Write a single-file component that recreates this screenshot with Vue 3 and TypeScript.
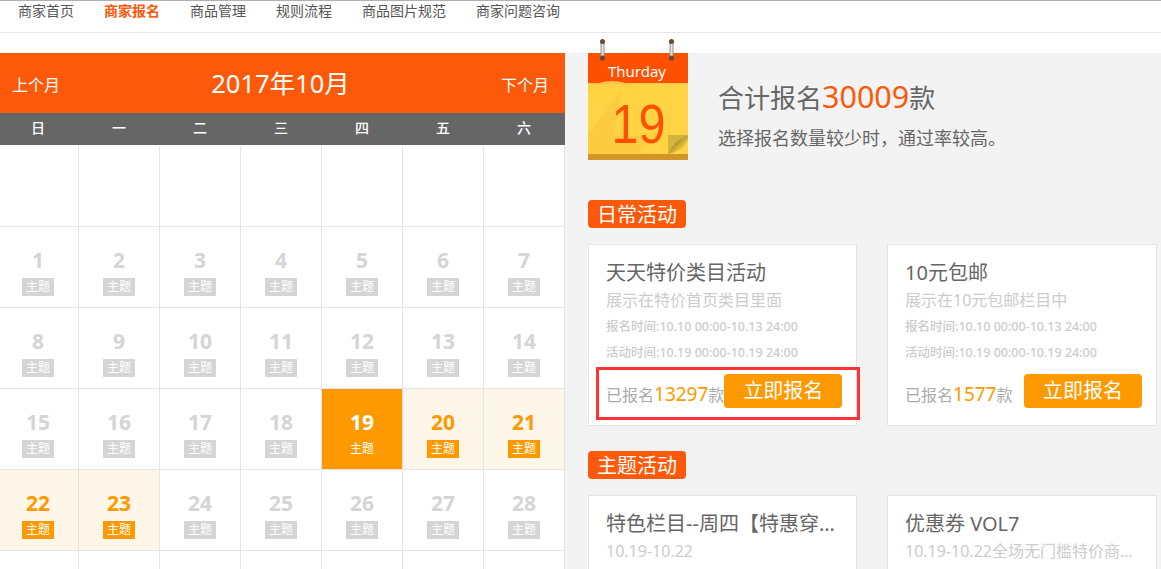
<script setup lang="ts">
interface Cell {
  day?: number
  state?: 'today' | 'open'
}

interface Activity {
  title: string
  desc: string
  signup?: string
  period?: string
  count?: number
  marked?: boolean
}

const navItems = ['商家首页', '商家报名', '商品管理', '规则流程', '商品图片规范', '商家问题咨询']
const weekdays = ['日', '一', '二', '三', '四', '五', '六']

const cells: Cell[] = [
  ...Array.from({ length: 7 }, () => ({})),
  ...Array.from({ length: 28 }, (_, i): Cell => {
    const day = i + 1
    if (day === 19) return { day, state: 'today' }
    if (day >= 20 && day <= 23) return { day, state: 'open' }
    return { day }
  }),
  ...Array.from({ length: 7 }, () => ({}))
]

const daily: Activity[] = [
  {
    title: '天天特价类目活动',
    desc: '展示在特价首页类目里面',
    signup: '10.10 00:00-10.13 24:00',
    period: '10.19 00:00-10.19 24:00',
    count: 13297,
    marked: true
  },
  {
    title: '10元包邮',
    desc: '展示在10元包邮栏目中',
    signup: '10.10 00:00-10.13 24:00',
    period: '10.19 00:00-10.19 24:00',
    count: 1577
  }
]

const themed: Activity[] = [
  { title: '特色栏目--周四【特惠穿搭专场】', desc: '10.19-10.22' },
  { title: '优惠券 VOL7', desc: '10.19-10.22全场无门槛特价商品专场活动' }
]
</script>

<template>
  <div class="page">
    <nav class="nav">
      <a v-for="(item, i) in navItems" :key="item" :class="{ active: i === 1 }">{{ item }}</a>
    </nav>
    <div class="strip"></div>

    <main class="main">
      <section class="calendar">
        <header class="month">
          <span class="month-link">上个月</span>
          <h1>2017年10月</h1>
          <span class="month-link">下个月</span>
        </header>
        <div class="weekdays">
          <span v-for="w in weekdays" :key="w">{{ w }}</span>
        </div>
        <div class="days">
          <div v-for="(cell, i) in cells" :key="i" class="cell" :class="cell.state">
            <template v-if="cell.day">
              <b>{{ cell.day }}</b>
              <span class="tag">主题</span>
            </template>
          </div>
        </div>
      </section>

      <section class="side">
        <div class="hero">
          <svg class="hero-icon" width="100" height="121" viewBox="0 0 100 121">
            <defs>
              <linearGradient id="pin" x1="0" x2="1" y1="0" y2="0">
                <stop offset="0" stop-color="#8d8d8d" />
                <stop offset="0.5" stop-color="#e6e6e6" />
                <stop offset="1" stop-color="#8d8d8d" />
              </linearGradient>
              <linearGradient id="fold" x1="0" x2="1" y1="0" y2="1">
                <stop offset="0.25" stop-color="#9c7c1c" />
                <stop offset="0.75" stop-color="#f2cd45" />
              </linearGradient>
            </defs>
            <rect x="0" y="14" width="100" height="30" fill="#ff5000" />
            <rect x="0" y="44" width="100" height="71" fill="#ffd343" />
            <path d="M0 97 L34 50 L26 97 H64 L50 115 H0 Z" fill="#fccb40" />
            <path d="M0 50 Q25 36 47 50" fill="none" stroke="#fccb40" stroke-width="2" />
            <rect x="0" y="115" width="100" height="6" fill="#d2952a" />
            <path d="M0 44.5 H100" stroke="#ffb35c" stroke-width="1" stroke-dasharray="2 1" />
            <path d="M80 115 V96 H100 Z" fill="#d6b53f" />
            <path d="M80 115 Q86 101 100 96 V100 Q97 111 80 115 Z" fill="url(#fold)" />
            <rect x="12.5" y="2" width="4" height="17" fill="url(#pin)" />
            <rect x="81.5" y="2" width="4" height="17" fill="url(#pin)" />
            <circle cx="14.5" cy="2.5" r="2.5" fill="#6b4a30" />
            <circle cx="14.5" cy="19" r="2.5" fill="#5a4a40" />
            <circle cx="83.5" cy="2.5" r="2.5" fill="#6b4a30" />
            <circle cx="83.5" cy="19" r="2.5" fill="#5a4a40" />
            <text x="49" y="37.5" class="icon-week">Thurday</text>
            <text x="50.5" y="103.5" class="icon-day" textLength="54" lengthAdjust="spacingAndGlyphs">19</text>
          </svg>
          <div class="hero-text">
            <p class="total">合计报名<em>30009</em>款</p>
            <p class="hint">选择报名数量较少时，通过率较高。</p>
          </div>
        </div>

        <h2 class="section-tag">日常活动</h2>
        <div class="cards">
          <article v-for="a in daily" :key="a.title" class="card">
            <h3>{{ a.title }}</h3>
            <p class="desc">{{ a.desc }}</p>
            <p class="time">报名时间:{{ a.signup }}</p>
            <p class="time">活动时间:{{ a.period }}</p>
            <div class="foot">
              <span class="count">已报名<em>{{ a.count }}</em>款</span>
              <button type="button">立即报名</button>
            </div>
            <div v-if="a.marked" class="marker"></div>
          </article>
        </div>

        <h2 class="section-tag second">主题活动</h2>
        <div class="cards">
          <article v-for="a in themed" :key="a.title" class="card">
            <h3>{{ a.title }}</h3>
            <p class="desc">{{ a.desc }}</p>
          </article>
        </div>
      </section>
    </main>
  </div>
</template>

<style>
html,
body {
  margin: 0;
  height: 569px;
  overflow: hidden;
  background: #fff;
}
</style>

<style scoped>
.page {
  height: 569px;
  overflow: hidden;
  font-family: "Noto Sans", "Noto Sans CJK SC", sans-serif;
  color: #666;
}

.nav {
  display: flex;
  gap: 30px;
  height: 33px;
  padding-left: 18px;
  border-top: 1px solid #b0b0b0;
  border-bottom: 1px solid #e5e5e5;
  box-sizing: border-box;
  font-size: 14px;
  line-height: 20px;
}

.nav a {
  color: #555;
}

.nav a.active {
  color: #fc5a0a;
  font-weight: 700;
}

.strip {
  height: 20px;
}

.main {
  display: flex;
  height: 516px;
  background: #f3f3f3;
}

.calendar {
  flex: 0 0 565px;
  overflow: hidden;
  background: #fff;
}

.month {
  display: flex;
  align-items: center;
  justify-content: space-between;
  height: 60px;
  padding: 0 16px 0 12px;
  background: #fc5a0a;
  color: #fff;
}

.month h1 {
  margin: 0 0 3px;
  font-size: 25.5px;
  font-weight: 400;
}

.month-link {
  font-size: 16px;
  padding-top: 2px;
}

.weekdays,
.days {
  display: grid;
  grid-template-columns: repeat(7, 81px);
  margin-left: -2px;
}

.weekdays {
  height: 32px;
  background: #666;
  color: #fff;
  font-size: 14px;
  font-weight: 500;
  line-height: 30px;
  text-align: center;
  text-indent: -1px;
}

.days {
  padding-top: 1px;
}

.cell {
  display: flex;
  flex-direction: column;
  align-items: center;
  height: 81px;
  box-sizing: border-box;
  padding-top: 19px;
  border-right: 1px solid #e5e5e5;
  border-bottom: 1px solid #e5e5e5;
  color: #d5d5d5;
}

.cell b {
  font-size: 21px;
  line-height: 28px;
}

.tag {
  width: 32px;
  height: 18px;
  margin-top: 4px;
  background: #d5d5d5;
  color: #fff;
  font-size: 12px;
  line-height: 18px;
  text-align: center;
}

.cell.open {
  background: #fef6e8;
  color: #f90;
}

.cell.open .tag {
  background: #f90;
}

.cell.today {
  background: #f90;
  color: #fff;
}

.cell.today .tag {
  background: transparent;
}

.side {
  flex: 1;
  padding-left: 23px;
}

.hero {
  display: flex;
  align-items: flex-start;
  gap: 30px;
}

.hero-icon {
  flex: none;
  margin-top: -14px;
  overflow: visible;
}

.icon-week {
  fill: #fff;
  font-size: 15px;
  text-anchor: middle;
}

.icon-day {
  fill: #ff5000;
  font-family: "Liberation Sans", sans-serif;
  font-size: 56px;
  text-anchor: middle;
}

.hero-text {
  padding-top: 24px;
}

.hero-text p {
  margin: 0;
}

.total {
  font-size: 26px;
  line-height: 38px;
}

.total em {
  font-size: 30.5px;
  font-style: normal;
  color: #fc5a0a;
}

.hint {
  margin-top: 8px !important;
  font-size: 18px;
  line-height: 26px;
}

.section-tag {
  width: fit-content;
  height: 28px;
  margin: 40px 0 16px;
  padding: 0 9px;
  border-radius: 4px;
  background: #fc5a0a;
  color: #fff;
  font-size: 20px;
  font-weight: 400;
  line-height: 29px;
}

.section-tag.second {
  margin-top: 25px;
}

.cards {
  display: grid;
  grid-template-columns: 269px 270px;
  gap: 30px;
}

.card {
  position: relative;
  box-sizing: border-box;
  padding: 14px 14px 17px 17px;
  border: 1px solid #e5e5e5;
  background: #fff;
  min-width: 0;
}

.card h3 {
  margin: 0;
  overflow: hidden;
  font-size: 20px;
  font-weight: 400;
  line-height: 28px;
  text-overflow: ellipsis;
  white-space: nowrap;
}

.desc {
  margin: 0;
  overflow: hidden;
  color: #ccc;
  font-size: 16px;
  line-height: 27px;
  text-overflow: ellipsis;
  white-space: nowrap;
}

.time {
  margin: 0;
  color: #ccc;
  font-size: 12.5px;
  font-weight: 500;
  line-height: 26px;
  white-space: nowrap;
}

.foot {
  display: flex;
  align-items: flex-end;
  justify-content: space-between;
  margin-top: 8px;
}

.count {
  color: #aaa;
  font-size: 16px;
  line-height: 28px;
  white-space: nowrap;
  margin-bottom: -1px;
}

.count em {
  color: #f90;
  font-size: 19px;
  font-style: normal;
}

.foot button {
  flex: none;
  width: 118px;
  height: 34px;
  padding: 0;
  border: 0;
  border-radius: 4px;
  background: #f90;
  color: #fff;
  font: inherit;
  font-size: 20px;
  line-height: 34px;
}

.marker {
  position: absolute;
  left: 7px;
  top: 122px;
  width: 264px;
  height: 53px;
  box-sizing: border-box;
  border: 3px solid #f33;
  pointer-events: none;
}
</style>
